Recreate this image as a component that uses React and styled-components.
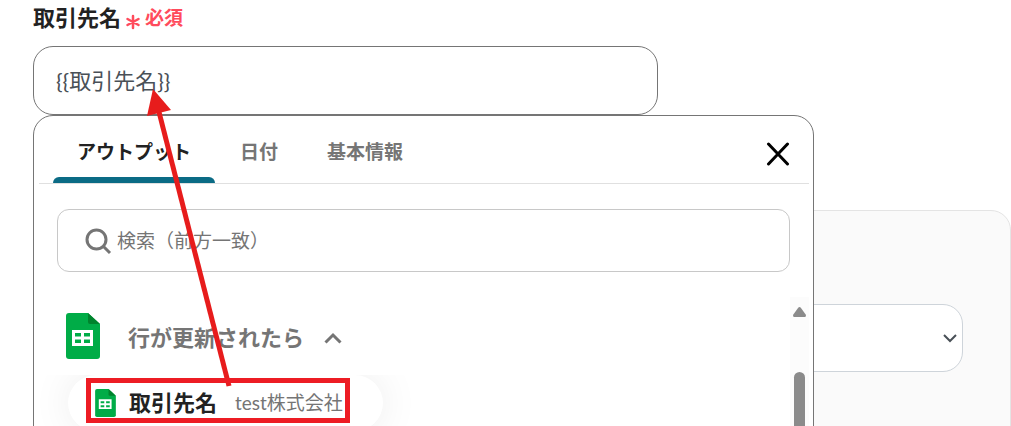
import React from "react";
import styled, { createGlobalStyle } from "styled-components";

const GlobalStyle = createGlobalStyle`
  *, *::before, *::after { box-sizing: border-box; }
  body {
    margin: 0;
    background: #fff;
    color: #222;
    font-family: Lato, "Noto Sans CJK JP", sans-serif;
  }
  button, input, select { font: inherit; color: inherit; }
  button { border: 0; padding: 0; background: none; cursor: pointer; }
`;

const Page = styled.main`
  position: relative;
  height: 100vh;
  padding-left: 33px;
  overflow: hidden;
`;

const FieldHeader = styled.div`
  display: flex;
  align-items: center;
  gap: 5px;
  height: 36px;
  margin-bottom: 10px;
`;

const FieldLabel = styled.label`
  font-size: 22px;
  font-weight: 700;
  line-height: 36px;
`;

const Required = styled.span`
  display: flex;
  align-items: center;
  gap: 5px;
  color: #ff4b5c;
  font-size: 19px;
  font-weight: 700;
  line-height: 36px;

  svg { margin-top: 7px; }
`;

const Anchor = styled.div`
  position: relative;
`;

const TextField = styled.input`
  display: block;
  width: calc(100% - 353px);
  height: 69px;
  padding: 0 22px 4px;
  border: 1px solid #757575;
  border-radius: 20px;
  background: #fff;
  color: #495057;
  font-size: 22px;
  outline: 0;
`;

const Popover = styled.section`
  position: absolute;
  z-index: 1;
  top: 100%;
  left: 0;
  right: 197px;
  height: 480px;
  display: flex;
  flex-direction: column;
  padding: 0 4px 0 5px;
  border: 1px solid #757575;
  border-radius: 20px;
  background: #fff;
`;

const TabBar = styled.div`
  display: flex;
  flex: none;
  gap: 1px;
  height: 68px;
  padding: 0 19px 0 14px;
  border-bottom: 1px solid #e0e0e0;
`;

const Tab = styled.button`
  position: relative;
  padding: 2px 24px 0;
  color: ${(p) => (p.$active ? "#222" : "#757575")};
  font-size: 19px;
  font-weight: 700;

  &::after {
    content: "";
    display: ${(p) => (p.$active ? "block" : "none")};
    position: absolute;
    left: 0;
    right: 0;
    bottom: 0;
    height: 6px;
    border-radius: 6px 6px 0 0;
    background: #0b6b85;
  }
`;

const CloseButton = styled.button`
  display: flex;
  align-items: center;
  margin-left: auto;
  padding-top: 8px;
  color: #000;
`;

const SearchBox = styled.label`
  display: flex;
  align-items: center;
  flex: none;
  gap: 5px;
  height: 63px;
  margin: 25px 19px 25px 18px;
  padding: 0 26px;
  border: 1px solid #c8c8c8;
  border-radius: 12px;
  color: #757575;
`;

const SearchInput = styled.input`
  flex: 1;
  min-width: 0;
  padding: 0;
  border: 0;
  outline: 0;
  background: none;
  font-size: 19px;

  &::placeholder { color: #757575; opacity: 1; }
`;

const Results = styled.div`
  display: flex;
  flex: 1;
  min-height: 0;
`;

const Groups = styled.div`
  flex: 1;
  min-width: 0;
  overflow: hidden;
`;

const GroupHeader = styled.button`
  display: flex;
  align-items: center;
  width: 100%;
  height: 78px;
  padding-left: 27px;
  color: #757575;
  font-size: 22px;
  font-weight: 700;

  span { margin: 0 20px 0 28px; }
  svg:last-child { margin-top: 4px; }
`;

const ItemList = styled.div`
  overflow: hidden;
  height: 160px;
  padding-left: 29px;
`;

const Item = styled.button`
  display: flex;
  align-items: center;
  height: 56px;
  padding: 0 40px 0 27px;
  border-radius: 28px;
  background: #fff;
  box-shadow: 0 0 40px rgba(0, 0, 0, 0.08);

  span { padding-bottom: 4px; }
`;

const ItemName = styled.span`
  margin: 0 18px 0 13px;
  font-size: 22px;
  font-weight: 700;
`;

const ItemValue = styled.span`
  color: #757575;
  font-size: 19px;
`;

const ScrollTrack = styled.div`
  display: flex;
  flex-direction: column;
  align-items: center;
  flex: none;
  gap: 55px;
  width: 19px;
  padding-top: 10px;
  background: #fcfcfc;
`;

const ScrollThumb = styled.div`
  width: 11px;
  height: 90px;
  border-radius: 6px;
  background: #8b8b8b;
`;

const Card = styled.section`
  min-height: 320px;
  margin-top: 95px;
  padding: 93px 47px 47px;
  border: 1px solid #e4e4e4;
  border-radius: 20px;
  background: #fafafa;
`;

const SelectWrap = styled.div`
  position: relative;
  color: #495057;

  svg {
    position: absolute;
    right: 5px;
    top: 29px;
    pointer-events: none;
  }
`;

const Select = styled.select`
  display: block;
  appearance: none;
  width: 100%;
  height: 68px;
  padding: 0 22px;
  border: 1px solid #ced4da;
  border-radius: 20px;
  background: #fff;
  font-size: 22px;
`;

const Annotation = styled.svg`
  position: absolute;
  z-index: 2;
  top: 0;
  left: 0;
  pointer-events: none;
`;

const SheetIcon = ({ width, height }) => (
  <svg width={width} height={height} viewBox="0 0 34 46" aria-hidden="true">
    <path d="M3 0H22L34 11V43a3 3 0 0 1-3 3H3a3 3 0 0 1-3-3V3a3 3 0 0 1 3-3Z" fill="#00ac47" />
    <path d="M22 0L34 11H24a2 2 0 0 1-2-2Z" fill="#00832d" />
    <path
      d="M6 17H27V33H6ZM9 20V23.500H15V20ZM18 20V23.500H24V20ZM9 26.500V30H15V26.500ZM18 26.500V30H24V26.500Z"
      fill="#fff"
      fillRule="evenodd"
    />
  </svg>
);

const Chevron = ({ width, height, d, stroke }) => (
  <svg width={width} height={height} fill="none" stroke="currentColor" strokeWidth={stroke} aria-hidden="true">
    <path d={d} />
  </svg>
);

export default function App() {
  return (
    <>
      <GlobalStyle />
      <Page>
        <FieldHeader>
          <FieldLabel htmlFor="client">取引先名</FieldLabel>
          <Required>
            <svg width="14" height="16" fill="none" stroke="currentColor" strokeWidth="2.500" strokeLinecap="round" aria-hidden="true">
              <path d="M7 2V14M1.500 5L12.500 11M12.500 5L1.500 11" />
            </svg>
            必須
          </Required>
        </FieldHeader>
        <Anchor>
          <TextField id="client" type="text" defaultValue="{{取引先名}}" />
          <Popover>
            <TabBar role="tablist">
              <Tab role="tab" aria-selected="true" $active>アウトプット</Tab>
              <Tab role="tab" aria-selected="false">日付</Tab>
              <Tab role="tab" aria-selected="false">基本情報</Tab>
              <CloseButton aria-label="閉じる">
                <svg width="24" height="24" fill="none" stroke="currentColor" strokeWidth="3" strokeLinecap="round">
                  <path d="M2.500 2L21.500 22M21.500 2L2.500 22" />
                </svg>
              </CloseButton>
            </TabBar>
            <SearchBox>
              <svg width="28" height="28" fill="none" stroke="currentColor" strokeWidth="3" aria-hidden="true">
                <circle cx="12.500" cy="12.500" r="9.500" />
                <path d="M19 19L26 26" />
              </svg>
              <SearchInput type="text" placeholder="検索（前方一致）" aria-label="検索" />
            </SearchBox>
            <Results>
              <Groups>
                <GroupHeader aria-expanded="true">
                  <SheetIcon width={34} height={46} />
                  <span>行が更新されたら</span>
                  <Chevron width={18} height={14} stroke={3} d="M1.500 11.500L9 4L16.500 11.500" />
                </GroupHeader>
                <ItemList>
                  <Item>
                    <SheetIcon width={21} height={28} />
                    <ItemName>取引先名</ItemName>
                    <ItemValue>test株式会社</ItemValue>
                  </Item>
                </ItemList>
              </Groups>
              <ScrollTrack>
                <svg width="13" height="10" fill="#8b8b8b" aria-hidden="true">
                  <path d="M5 1Q6.500 -1 8 1L13 8Q13 10 12 10H1Q0 10 0 8Z" />
                </svg>
                <ScrollThumb />
              </ScrollTrack>
            </Results>
          </Popover>
        </Anchor>
        <Card>
          <SelectWrap>
            <Select aria-label="選択" />
            <Chevron width={16} height={11} stroke={2} d="M2 2L8 8L14 2" />
          </SelectWrap>
        </Card>
        <Annotation width="360" height="426" aria-hidden="true">
          <path d="M229 386L159 112" stroke="#e71c1c" strokeWidth="5" />
          <path d="M153 89L171 110L147 116Z" fill="#e71c1c" />
          <rect x="88.500" y="380.500" width="259" height="40" fill="none" stroke="#ed1c24" strokeWidth="5" />
        </Annotation>
      </Page>
    </>
  );
}
